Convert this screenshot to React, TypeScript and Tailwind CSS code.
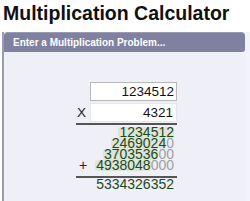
const rows: { digits: string; zeros: string; sign?: string }[] = [
  { digits: "1234512", zeros: "" },
  { digits: "2469024", zeros: "0" },
  { digits: "3703536", zeros: "00" },
  { digits: "4938048", zeros: "000", sign: "+" },
];

export default function App() {
  return (
    <div className="h-[201px] w-[250px] overflow-hidden bg-white font-['Liberation_Sans',Arial,sans-serif]">
      <h1 className="pl-[3px] pt-[1px] text-[19.5px] font-bold leading-[24px] text-[#111]">
        Multiplication Calculator
      </h1>
      <div className="mt-[7px] flex">
        <div className="ml-[2px] w-[243px] border-l-2 border-[#9a9ab4] bg-[#efeff8]">
          <div className="h-[20px] rounded-t-[4px] rounded-br-[3px] border-t border-[#9a9ab0] bg-[#8080a0] pl-[9px] text-[10px] font-bold leading-[19px] text-white">
            Enter a Multiplication Problem...
          </div>
          <div className="h-[150px] pt-[30px]">
            <div className="ml-[72px] w-[101px]">
              <div className="flex justify-end">
                <input
                  readOnly
                  value="1234512"
                  className="h-[19px] w-[87px] border border-[#b8b8b8] bg-white pr-[2px] text-right text-[13.5px] leading-[17px] text-[#111] outline-none"
                />
              </div>
              <div className="mt-[2px] flex items-center justify-between">
                <span className="pl-[1px] text-[13.5px] leading-[19px] text-[#222]">X</span>
                <input
                  readOnly
                  value="4321"
                  className="h-[19px] w-[87px] border border-[#e6e6ee] bg-white pr-[3px] text-right text-[13.5px] leading-[17px] text-[#111] outline-none"
                />
              </div>
              <div className="mt-[1px] h-[2px] w-full bg-[#555]" />
              <div className="pt-[2px] text-[14px] leading-[11px]">
                {rows.map((r) => (
                  <div key={r.digits} className="flex h-[11px] justify-between pr-[3px]">
                    <span className="pl-[3px] text-[#222]">{r.sign ?? ""}</span>
                    <span className="flex">
                      <span className="inline-block h-[11px] rounded-[3px] bg-[#dde4d8] pl-[1px] text-[#1d4a1d]">
                        {r.digits}
                      </span>
                      <span className="inline-block h-[11px] text-[#a0a0a0]">{r.zeros}</span>
                    </span>
                  </div>
                ))}
              </div>
              <div className="mt-[5px] h-[2px] w-full bg-[#555]" />
              <div className="pr-[3px] pt-[1px] text-right text-[14px] leading-[11px] text-[#1d4a1d]">
                5334326352
              </div>
            </div>
          </div>
        </div>
        <div className="w-[5px] bg-[#f3f3fb]" />
      </div>
    </div>
  );
}
